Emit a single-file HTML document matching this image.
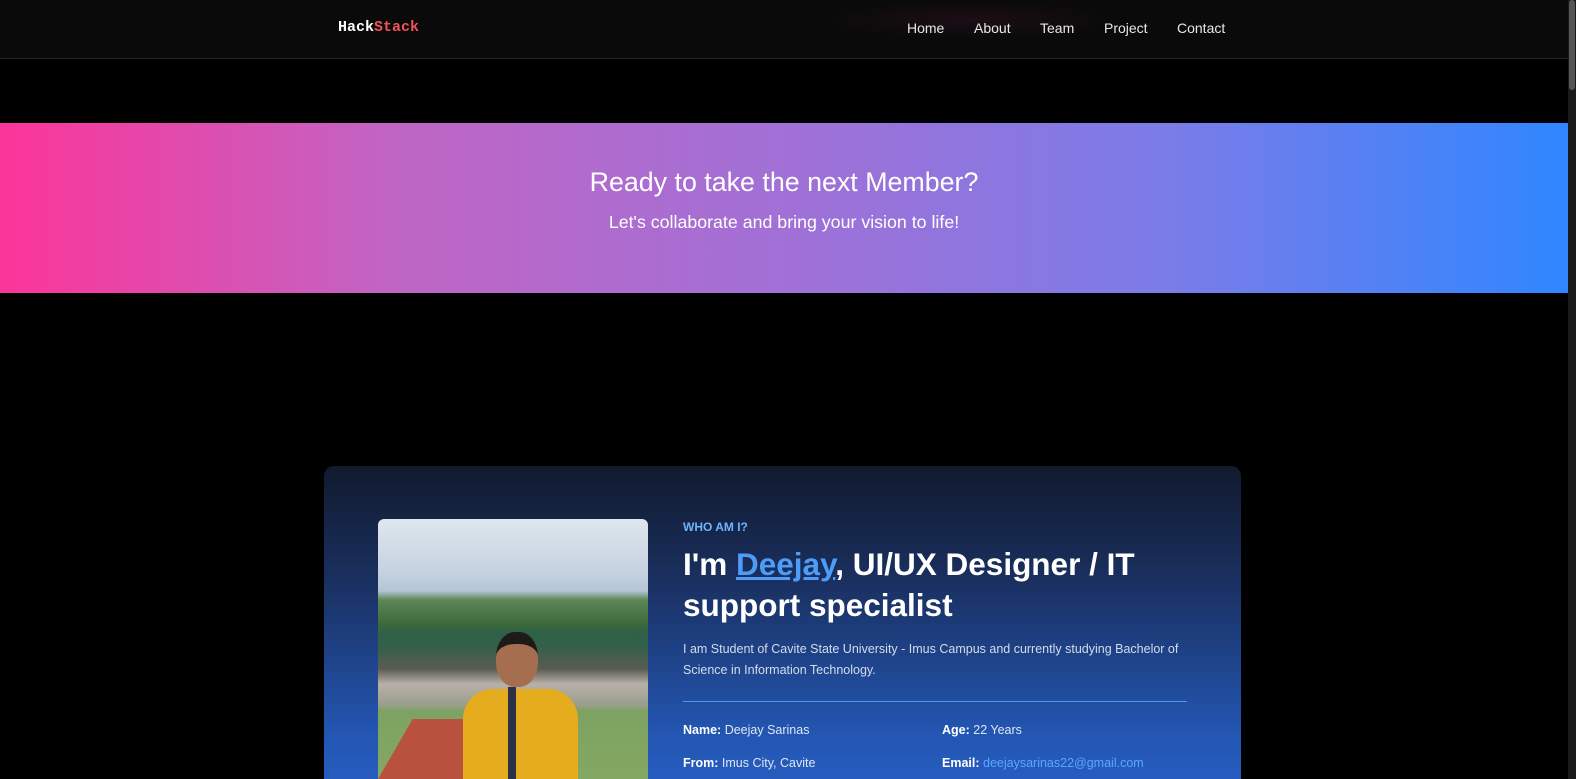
<!DOCTYPE html>
<html><head><meta charset="utf-8"><style>
*{margin:0;padding:0;box-sizing:border-box}
html,body{width:1576px;height:779px;overflow:hidden;background:#000;font-family:"Liberation Sans",sans-serif}
#w{position:relative;width:1576px;height:779px;overflow:hidden}
.sb{position:absolute;right:0;top:0;width:8px;height:779px;background:#1a1a1a}
.sb div{position:absolute;left:1px;top:0;width:6px;height:90px;background:#555;border-radius:3px}
nav{position:absolute;left:0;top:0;width:1568px;height:59px;background:#0a0a0a;border-bottom:1px solid #262626}
nav .glow{position:absolute;left:820px;top:0;width:300px;height:40px;background:radial-gradient(ellipse at center,rgba(60,20,40,.35),transparent 70%)}
.logo{position:absolute;left:338px;top:19px;font-family:"Liberation Mono",monospace;font-weight:bold;font-size:15px;color:#fff}
.logo span{color:#f0525a}
.links{position:absolute;top:20px;left:907px;font-size:14px;color:#e8e8e8}
.links a{position:absolute;white-space:nowrap}
.hero{position:absolute;left:0;top:123px;width:1568px;height:170px;background:linear-gradient(90deg,#fc3599,#c065c4 25%,#a170d6 50%,#7a7ce8 75%,#2f86ff);color:#fff;text-align:center}
.hero h2{font-weight:normal;font-size:26.8px;margin-top:44px}
.hero p{font-size:17.8px;margin-top:14px}
.card{position:absolute;left:324px;top:466px;width:917px;height:330px;border-radius:10px;background:linear-gradient(180deg,#111a2e 0%,#1a3060 35%,#2355b0 80%,#275fc4 100%)}
.photo{position:absolute;left:54px;top:53px;width:270px;height:300px;border-radius:6px;overflow:hidden;background:linear-gradient(180deg,#dfe6ee 0%,#c4d2e0 18%,#b3c4d4 24%,#5d8656 27%,#3d6a3a 35%,#2e6148 38%,#35604a 43%,#5a5c52 50%,#b8b0a8 55%,#9a9e8c 62%,#7ea262 64%,#87ac63 100%)}
.track{position:absolute;left:0;top:200px;width:110px;height:60px;background:#b8523e;transform:skewX(-30deg);transform-origin:bottom left}
.shirt{position:absolute;left:85px;top:170px;width:115px;height:120px;background:#e5ac1d;border-radius:30px 30px 0 0}
.head{position:absolute;left:118px;top:113px;width:42px;height:55px;background:#a56e4e;border-radius:45%;border-top:12px solid #1d1a1a}
.lan{position:absolute;left:130px;top:168px;width:8px;height:110px;background:#2a3045}
.who{position:absolute;left:359px;top:54px;font-size:12px;font-weight:bold;color:#6fb4ff}
h1{position:absolute;left:359px;top:78px;width:510px;font-size:31.5px;line-height:41px;color:#fff;font-weight:bold}
h1 a{color:#4d9cf8;text-decoration:underline}
.desc{position:absolute;left:359px;top:173px;width:510px;font-size:12.5px;line-height:20.5px;color:#d4dcea}
.hr{position:absolute;left:359px;top:235px;width:504px;height:1px;background:#4c97f2}
.f{position:absolute;font-size:12.5px;color:#dfe6f3}
.f b{color:#fff}
.f a{color:#58a8ff}
</style></head><body><div id="w">
<nav><div class="glow"></div><div class="logo">Hack<span>Stack</span></div>
<div class="links"><a style="left:0">Home</a><a style="left:67px">About</a><a style="left:133px">Team</a><a style="left:197px">Project</a><a style="left:270px">Contact</a></div></nav>
<div class="hero"><h2>Ready to take the next Member?</h2><p>Let's collaborate and bring your vision to life!</p></div>
<div class="card">
<div class="photo"><div class="track"></div><div class="shirt"></div><div class="lan"></div><div class="head"></div></div>
<div class="who">WHO AM I?</div>
<h1>I'm <a>Deejay</a>, UI/UX Designer / IT support specialist</h1>
<div class="desc">I am Student of Cavite State University - Imus Campus and currently studying Bachelor of Science in Information Technology.</div>
<div class="hr"></div>
<div class="f" style="left:359px;top:257px"><b>Name:</b> Deejay Sarinas</div>
<div class="f" style="left:618px;top:257px"><b>Age:</b> 22 Years</div>
<div class="f" style="left:359px;top:290px"><b>From:</b> Imus City, Cavite</div>
<div class="f" style="left:618px;top:290px"><b>Email:</b> <a>deejaysarinas22@gmail.com</a></div>
</div>
<div class="sb"><div></div></div>
</div></body></html>
